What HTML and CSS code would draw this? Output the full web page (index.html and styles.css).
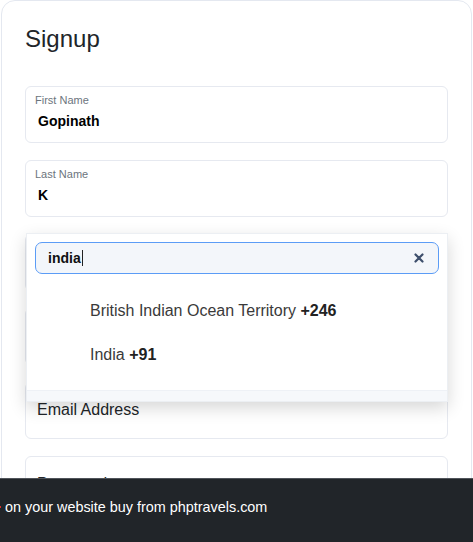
FILE: index.html
```html
<!DOCTYPE html>
<html lang="en">
<head>
<meta charset="utf-8">
<title>Signup</title>
<link rel="stylesheet" href="styles.css">
</head>
<body>
<div class="card">
  <h1 class="title">Signup</h1>
  <div class="fields">
    <div class="field">
      <div class="label">First Name</div>
      <div class="value">Gopinath</div>
    </div>
    <div class="field">
      <div class="label">Last Name</div>
      <div class="value">K</div>
    </div>
    <div class="field-wrap">
      <div class="field">
        <div class="label">Phone</div>
        <div class="value">&nbsp;</div>
      </div>
      <div class="dropdown">
        <div class="search">
          <span class="search-text">india</span><span class="caret"></span>
          <svg class="clear" width="10" height="10" viewBox="0 0 10 10" aria-hidden="true">
            <path d="M1.5 1.5 L8.5 8.5 M8.5 1.5 L1.5 8.5" stroke="#3e4f6c" stroke-width="2.2" stroke-linecap="round"/>
          </svg>
        </div>
        <ul class="options">
          <li class="option">British Indian Ocean Territory <b>+246</b></li>
          <li class="option">India <b>+91</b></li>
        </ul>
        <div class="strip"></div>
      </div>
    </div>
    <div class="field">
      <div class="label">Country</div>
      <div class="value">&nbsp;</div>
    </div>
    <div class="field field-empty">
      <div class="placeholder">Email Address</div>
    </div>
    <div class="field field-empty">
      <div class="placeholder">Password</div>
    </div>
  </div>
</div>
<div class="notice"><span class="red-mark"></span>on your website buy from phptravels.com</div>
</body>
</html>
```

FILE: styles.css
```css
html, body {
  margin: 0;
  padding: 0;
  background: #ffffff;
  font-family: "Liberation Sans", Arial, sans-serif;
  color: #212529;
  overflow: hidden;
}

.card {
  margin: 0 1px;
  border: 1px solid #e4e8f0;
  border-radius: 14px;
  padding: 23px 23px 40px;
  min-height: 600px;
  background: #fff;
}

.title {
  margin: 0 0 33px;
  font-size: 24px;
  line-height: 29px;
  font-weight: 400;
  color: #212529;
}

.fields {
  display: flex;
  flex-direction: column;
  gap: 17px;
}

.field-wrap {
  position: relative;
}

.field {
  border: 1px solid #e6e9f0;
  border-radius: 6px;
  padding: 7px 12px 12px 9px;
  height: 36px;
  background: #fff;
}

.label {
  font-size: 11px;
  line-height: 13px;
  color: #6c757d;
}

.value {
  margin-top: 6px;
  padding-left: 3px;
  font-size: 14px;
  line-height: 17px;
  font-weight: 700;
  color: #000;
}

.field-empty {
  padding: 18px 12px 0 11px;
  height: 37px;
}

.placeholder {
  font-size: 16px;
  line-height: 18px;
  color: #212529;
}

.dropdown {
  position: absolute;
  top: -1px;
  left: 1px;
  right: 0;
  background: #fff;
  border: 1px solid #eceff3;
  box-shadow: 0 6px 16px rgba(0, 0, 0, 0.16);
  padding: 8px 8px 0;
  z-index: 5;
}

.search {
  display: flex;
  align-items: center;
  height: 30px;
  border: 1px solid #5b9cf6;
  border-radius: 7px;
  background: #f3f6fa;
  padding: 0 14px 0 12px;
}

.search-text {
  font-size: 14px;
  font-weight: 700;
  color: #111;
  line-height: 17px;
}

.caret {
  display: inline-block;
  width: 1px;
  height: 16px;
  background: #222;
  margin-left: 1px;
}

.clear {
  margin-left: auto;
}

.options {
  list-style: none;
  margin: 15px 0 0;
  padding: 0 0 13px;
}

.option {
  padding-left: 55px;
  font-size: 16px;
  line-height: 44px;
  color: #3a3a3a;
}

.option b {
  color: #222;
}

.strip {
  margin: 0 -8px;
  height: 10px;
  border-top: 1px solid #eef1f6;
  background: #f6f8fb;
}

.notice {
  position: fixed;
  left: 0;
  right: 0;
  bottom: 0;
  height: 43px;
  border-top: 1px solid #50545a;
  background: #212529;
  color: #fff;
  font-size: 14.4px;
  line-height: 16px;
  padding: 20px 0 0 5px;
}

.red-mark {
  position: absolute;
  left: 0;
  top: 27px;
  width: 1px;
  height: 2px;
  background: #d9302c;
}
```
